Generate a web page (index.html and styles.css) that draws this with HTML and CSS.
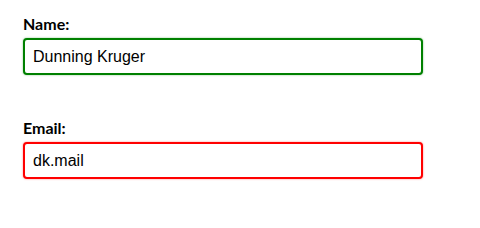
FILE: index.html
```html
<!DOCTYPE html>
<html>
<head>
<meta charset="utf-8">
<link rel="stylesheet" href="styles.css">
</head>
<body>
<form class="form">
  <div class="field">
    <label class="label" for="name">Name:</label>
    <input class="input input-valid" id="name" type="text" value="Dunning Kruger">
  </div>
  <div class="field">
    <label class="label" for="email">Email:</label>
    <input class="input input-invalid" id="email" type="text" value="dk.mail">
  </div>
</form>
</body>
</html>
```
FILE: styles.css
```css
html, body {
  margin: 0;
  padding: 0;
  background: #fff;
}
.form {
  padding: 14px 0 0 23px;
  font-family: Lato, "Open Sans", sans-serif;
}
.field {
  display: flex;
  flex-direction: column;
  align-items: flex-start;
  margin-bottom: 43px;
}
.label {
  display: block;
  font-weight: 700;
  font-size: 16px;
  line-height: 20px;
  height: 20px;
  margin-bottom: 4px;
  color: #000;
}
.input {
  box-sizing: border-box;
  width: 400px;
  height: 37px;
  padding: 0 8px;
  margin: 0;
  border: 2px solid;
  border-radius: 4px;
  font-family: "Liberation Sans", Arial, sans-serif;
  font-size: 16px;
  color: #000;
  background: #fff;
  outline: none;
}
.input-valid {
  border-color: #008000;
  box-shadow: 0 0 2px rgba(0, 128, 0, 0.5);
}
.input-invalid {
  border-color: #ff0000;
  box-shadow: 0 0 2px rgba(255, 0, 0, 0.5);
}
```
